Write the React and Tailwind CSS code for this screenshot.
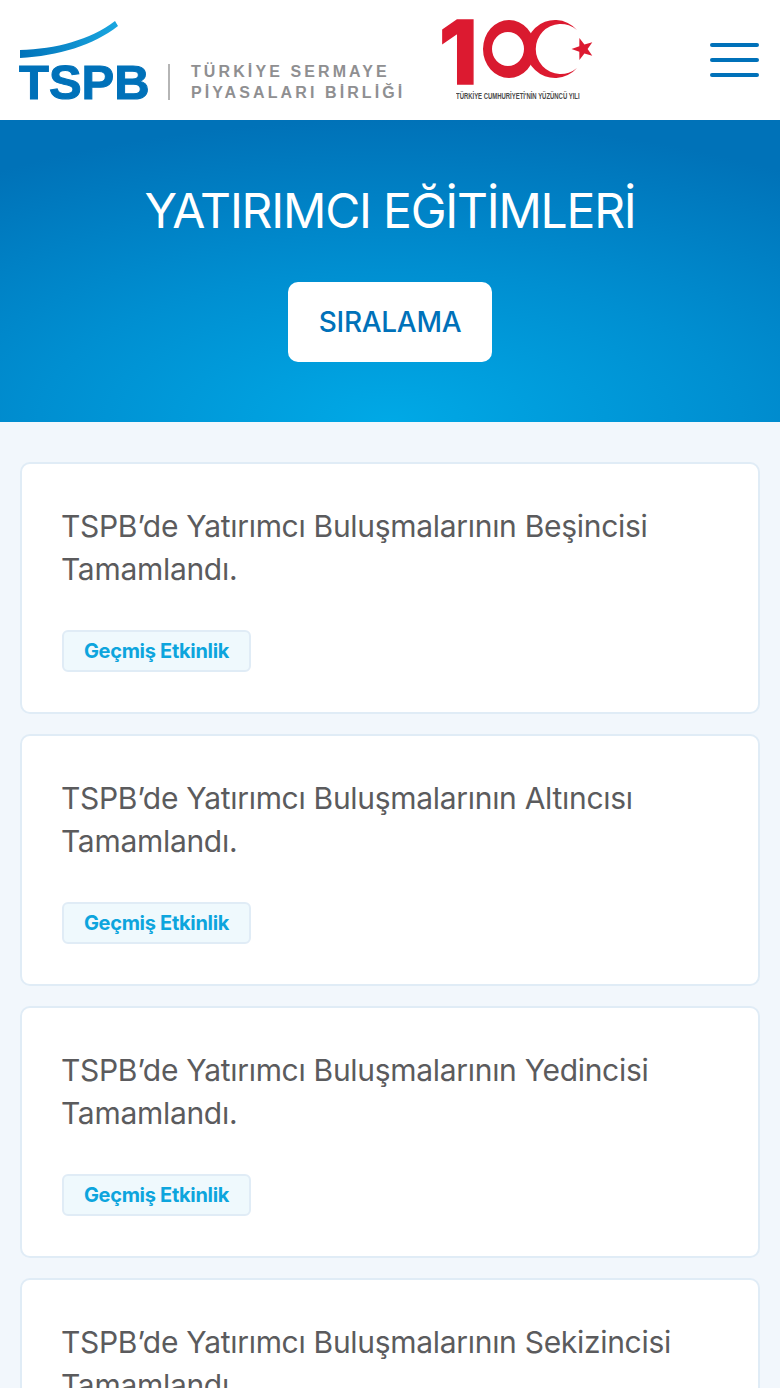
import React from 'react';

const events = ['Beşincisi', 'Altıncısı', 'Yedincisi', 'Sekizincisi'];

// five-pointed star, first tip pointing left
const starPoints = Array.from({ length: 10 }, (_, i) => {
  const r = i % 2 === 0 ? 11.5 : 4.6;
  const a = Math.PI + (i * Math.PI) / 5;
  return `${(142 + r * Math.cos(a)).toFixed(1)},${(31 + r * Math.sin(a)).toFixed(1)}`;
}).join(' ');

const TspbLogo = () => (
  <div className="relative w-[150px] h-[120px] shrink-0">
    <svg className="absolute left-0 top-0" width="150" height="64" viewBox="0 0 150 64">
      <defs>
        <linearGradient id="arc" x1="0" x2="1" y1="0" y2="0">
          <stop offset="0" stopColor="#0072b9" />
          <stop offset="1" stopColor="#1aa7e0" />
        </linearGradient>
      </defs>
      <path d="M20 50 C 56 49 90 40 115 21 L 118 26 C 94 45 58 56 20 58 Z" fill="url(#arc)" />
    </svg>
    <span className="absolute left-[19px] top-[57px] text-[49px] leading-[50px] font-bold text-[#0071b9] [-webkit-text-stroke:1px_#0071b9] font-['Liberation_Sans',sans-serif]">
      TSPB
    </span>
  </div>
);

const CentennialLogo = () => (
  <div className="relative w-[154px] h-[84px]">
    <svg className="absolute left-0 top-0 overflow-visible" width="154" height="70" viewBox="0 0 154 70">
      <text x="-2" y="66" fontFamily="Inter" fontWeight="800" fontSize="88" fill="#dc1a30" stroke="#dc1a30" strokeWidth="1.5">1</text>
      <path
        fillRule="evenodd"
        d="M42 31 A26 29 0 1 0 94 31 A26 29 0 1 0 42 31 Z M51 31 A16 17 0 1 0 83 31 A16 17 0 1 0 51 31 Z"
        fill="#d91a2f"
      />
      <path d="M136 12 A29 29 0 1 0 136 50 A25 25 0 1 1 136 12 Z" fill="#dc1a30" />
      <polygon points={starPoints} fill="#dc1a30" />
    </svg>
    <span className="absolute left-[15px] top-[73px] text-[9px] leading-[10px] font-bold text-[#4a4a4a] whitespace-nowrap font-['Liberation_Sans',sans-serif] scale-x-[0.66] origin-left">
      TÜRKİYE CUMHURİYETİ'NİN YÜZÜNCÜ YILI
    </span>
  </div>
);

const EventCard = ({ ordinal }) => (
  <div className="bg-white border-2 border-[#e0ecf6] rounded-[10px] h-[252px] shrink-0 pt-[41px] pl-[39px] pr-[40px]">
    <h3 className="text-[30px] leading-[43px] font-normal text-[#5b5b5d] tracking-[-0.3px]">
      TSPB’de Yatırımcı Buluşmalarının {ordinal} Tamamlandı.
    </h3>
    <span className="inline-flex items-center justify-center ml-px mt-[39px] h-[42px] w-[189px] bg-[#eff9fd] border-2 border-[#e0ecf6] rounded-[6px] text-[20px] font-bold text-[#0da5dd] tracking-[-0.3px]">
      Geçmiş Etkinlik
    </span>
  </div>
);

const App = () => {
  return (
    <div className="h-screen overflow-hidden bg-[#f2f7fc] font-['Inter','Noto_Sans',sans-serif]">
      <header className="h-[120px] bg-white flex items-start relative">
        <TspbLogo />
        <div className="w-[2px] h-[36px] bg-[#b5b5b5] mt-[64px] ml-[18px]" />
        <div className="mt-[61px] ml-[21px] text-[16px] leading-[21px] font-bold tracking-[3.1px] text-[#8f8f91] whitespace-nowrap font-['Liberation_Sans',sans-serif]">
          <div>TÜRKİYE SERMAYE</div>
          <div>PİYASALARI BİRLİĞİ</div>
        </div>
        <div className="absolute left-[441px] top-[18px]">
          <CentennialLogo />
        </div>
        <div className="absolute left-[710px] top-[43px] flex flex-col gap-[11px]">
          <span className="block w-[49px] h-[4px] rounded-full bg-[#0071b9]" />
          <span className="block w-[49px] h-[4px] rounded-full bg-[#0071b9]" />
          <span className="block w-[49px] h-[4px] rounded-full bg-[#0071b9]" />
        </div>
      </header>

      <section className="h-[302px] flex flex-col items-center pt-[59px] bg-[radial-gradient(ellipse_90%_100%_at_50%_100%,#00a9e6_0%,#008fd1_50%,#0072b8_100%)]">
        <h1 className="text-[48px] leading-[64px] font-normal text-white tracking-[-1.2px] whitespace-nowrap">
          YATIRIMCI EĞİTİMLERİ
        </h1>
        <button className="mt-[39px] w-[204px] h-[80px] bg-white rounded-[10px] text-[28px] font-medium text-[#0071b9] tracking-[-0.3px]">
          SIRALAMA
        </button>
      </section>

      <main className="flex flex-col gap-[20px] pt-[40px] px-[20px]">
        {events.map((ordinal) => (
          <EventCard key={ordinal} ordinal={ordinal} />
        ))}
      </main>
    </div>
  );
};

export default App;
